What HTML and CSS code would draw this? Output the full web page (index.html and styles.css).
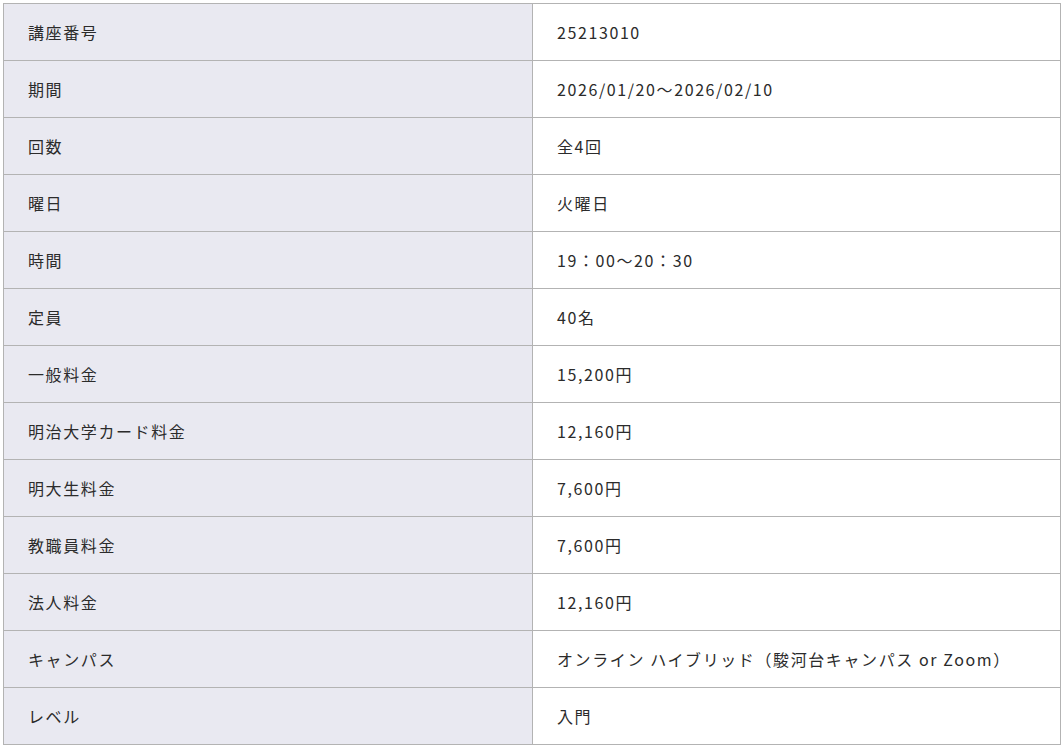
FILE: index.html
```html
<!DOCTYPE html>
<html lang="ja">
<head>
<meta charset="utf-8">
<link rel="stylesheet" href="styles.css">
</head>
<body>
<table class="info">
  <tbody>
    <tr><th>講座番号</th><td>25213010</td></tr>
    <tr><th>期間</th><td>2026/01/20～2026/02/10</td></tr>
    <tr><th>回数</th><td>全4回</td></tr>
    <tr><th>曜日</th><td>火曜日</td></tr>
    <tr><th>時間</th><td>19：00～20：30</td></tr>
    <tr><th>定員</th><td>40名</td></tr>
    <tr><th>一般料金</th><td>15,200円</td></tr>
    <tr><th>明治大学カード料金</th><td>12,160円</td></tr>
    <tr><th>明大生料金</th><td>7,600円</td></tr>
    <tr><th>教職員料金</th><td>7,600円</td></tr>
    <tr><th>法人料金</th><td>12,160円</td></tr>
    <tr><th>キャンパス</th><td>オンライン ハイブリッド（駿河台キャンパス or Zoom）</td></tr>
    <tr><th>レベル</th><td>入門</td></tr>
  </tbody>
</table>
</body>
</html>
```
FILE: styles.css
```css
html, body {
  margin: 0;
  background: #ffffff;
}
body {
  padding: 3px 1px 0 3px;
  font-family: "Noto Sans CJK JP", "Noto Sans", sans-serif;
  color: #2b2b2b;
}
.info {
  width: 1058px;
  border-collapse: collapse;
  table-layout: fixed;
}
.info th,
.info td {
  height: 56px;
  padding: 0 0 0 24px;
  border: 1px solid #b3b3b3;
  font-size: 16px;
  font-weight: 400;
  letter-spacing: 0.1em;
  text-align: left;
  vertical-align: middle;
  line-height: 1.5;
}
.info th {
  width: 504px;
  background: #e9e9f1;
}
.info td {
  background: #ffffff;
}
```
